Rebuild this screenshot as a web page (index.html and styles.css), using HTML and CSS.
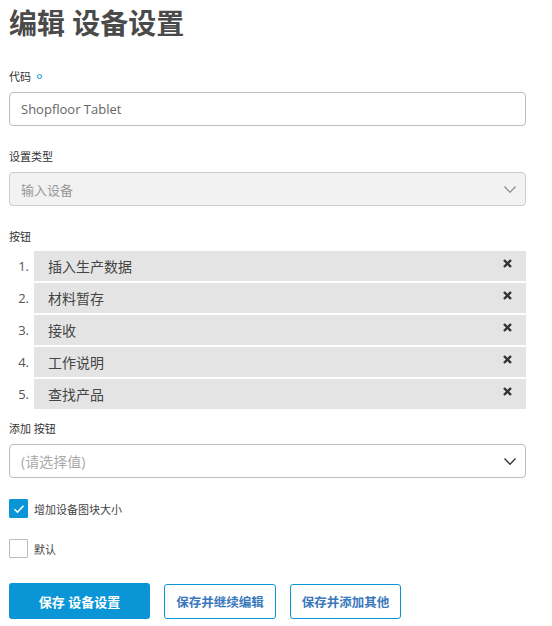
FILE: index.html
```html
<!DOCTYPE html>
<html lang="zh">
<head>
<meta charset="utf-8">
<link rel="stylesheet" href="styles.css">
</head>
<body>
<div class="page">
  <h1 class="title">编辑 设备设置</h1>

  <div class="field field-code">
    <label class="label">代码 <span class="req"></span></label>
    <div class="input">Shopfloor Tablet</div>
  </div>

  <div class="field field-type">
    <label class="label">设置类型</label>
    <div class="input select disabled">
      <span>输入设备</span>
      <svg class="chev" width="12" height="7" viewBox="0 0 12 7"><path d="M0.5 0.5l5.5 5.8 5.5-5.8" fill="none" stroke="#888" stroke-width="1.2"/></svg>
    </div>
  </div>

  <div class="field field-buttons">
    <label class="label">按钮</label>
    <ol class="list">
      <li><span class="num">1.</span><div class="item"><span>插入生产数据</span><svg class="x" width="9" height="9" viewBox="0 0 9 9"><path d="M1 1l7 7M8 1l-7 7" stroke="#333" stroke-width="2.4"/></svg></div></li>
      <li><span class="num">2.</span><div class="item"><span>材料暂存</span><svg class="x" width="9" height="9" viewBox="0 0 9 9"><path d="M1 1l7 7M8 1l-7 7" stroke="#333" stroke-width="2.4"/></svg></div></li>
      <li><span class="num">3.</span><div class="item"><span>接收</span><svg class="x" width="9" height="9" viewBox="0 0 9 9"><path d="M1 1l7 7M8 1l-7 7" stroke="#333" stroke-width="2.4"/></svg></div></li>
      <li><span class="num">4.</span><div class="item"><span>工作说明</span><svg class="x" width="9" height="9" viewBox="0 0 9 9"><path d="M1 1l7 7M8 1l-7 7" stroke="#333" stroke-width="2.4"/></svg></div></li>
      <li><span class="num">5.</span><div class="item"><span>查找产品</span><svg class="x" width="9" height="9" viewBox="0 0 9 9"><path d="M1 1l7 7M8 1l-7 7" stroke="#333" stroke-width="2.4"/></svg></div></li>
    </ol>
  </div>

  <div class="field field-add">
    <label class="label">添加 按钮</label>
    <div class="input select">
      <span class="ph">(请选择值)</span>
      <svg class="chev" width="12" height="7" viewBox="0 0 12 7"><path d="M0.5 0.5l5.5 5.8 5.5-5.8" fill="none" stroke="#333" stroke-width="1.3"/></svg>
    </div>
  </div>

  <div class="check-row first">
    <span class="box checked"><svg width="12" height="10" viewBox="0 0 12 10"><path d="M1.5 5.2l3 3 6-6.5" fill="none" stroke="#fff" stroke-width="1.6"/></svg></span>
    <span class="check-label">增加设备图块大小</span>
  </div>
  <div class="check-row">
    <span class="box"></span>
    <span class="check-label">默认</span>
  </div>

  <div class="actions">
    <button class="btn primary">保存 设备设置</button>
    <button class="btn outline w1">保存并继续编辑</button>
    <button class="btn outline w2">保存并添加其他</button>
  </div>
</div>
</body>
</html>
```

FILE: styles.css
```css
* { box-sizing: border-box; }
html, body { margin: 0; padding: 0; background: #fff; }
body {
  font-family: "Open Sans", "Noto Sans CJK SC", sans-serif;
  color: #333;
}
.page {
  width: 517px;
  margin-left: 9px;
  padding-top: 4px;
}
.title {
  margin: 0;
  font-size: 28px;
  line-height: 38px;
  font-weight: 700;
  color: #4a4a4a;
}
.field { display: flex; flex-direction: column; }
.field-code { margin-top: 27px; }
.field-type { margin-top: 23px; }
.field-buttons { margin-top: 23px; }
.field-buttons .label { margin-bottom: 7px; }
.field-add { margin-top: 12px; }
.label {
  font-size: 11px;
  line-height: 15px;
  font-weight: 400;
  color: #333;
  margin-bottom: 8px;
  display: flex;
  align-items: center;
  gap: 3px;
}
.req {
  width: 5px; height: 5px;
  border: 1.5px solid #0a96d6;
  border-radius: 50%;
  display: inline-block;
  margin-left: 3px;
}
.input {
  height: 34px;
  border: 1px solid #bdbdc2;
  border-radius: 4px;
  padding: 0 9px 0 11px;
  display: flex;
  align-items: center;
  font-size: 13px;
  color: #666;
}
.select { justify-content: space-between; }
.disabled { background: #f2f2f2; border-color: #ccc; color: #999; }
.ph { color: #aaa; font-size: 14px; }
.list {
  list-style: none;
  margin: 0;
  padding: 0;
  display: flex;
  flex-direction: column;
  gap: 2px;
}
.list li { display: flex; align-items: stretch; gap: 5px; }
.num {
  width: 20px;
  font-size: 13px;
  color: #555;
  display: flex; align-items: center; justify-content: flex-end;
}
.item {
  flex: 1;
  height: 30px;
  background: #e4e4e4;
  display: flex;
  align-items: center;
  justify-content: space-between;
  padding: 0 14px 1px 14px;
  font-size: 14px;
  color: #444;
}
.x { align-self: flex-start; margin-top: 8px; }
.check-row {
  display: flex;
  align-items: center;
  gap: 6px;
  margin-top: 21px;
}
.box {
  width: 19px; height: 19px;
  border: 1px solid #bbb;
  border-radius: 1px;
  display: flex; align-items: center; justify-content: center;
}
.box.checked { background: #0a96d6; border-color: #0a96d6; }
.check-label { font-size: 11px; color: #444; font-weight: 400; }
.actions {
  display: flex;
  align-items: center;
  gap: 14px;
  margin-top: 25px;
}
.btn {
  font-family: "Open Sans", "Noto Sans CJK SC", sans-serif;
  font-weight: 700;
  border-radius: 3px;
  cursor: pointer;
  padding: 0;
}
.primary {
  width: 141px; height: 36px;
  background: #0a96d6;
  border: none;
  color: #fff;
  font-size: 13px;
}
.outline {
  height: 35px;
  background: #fff;
  border: 1px solid #0a96d6;
  color: #3a78bd;
  font-size: 12.5px;
}
.w1 { width: 112px; }
.w2 { width: 111px; }
```
